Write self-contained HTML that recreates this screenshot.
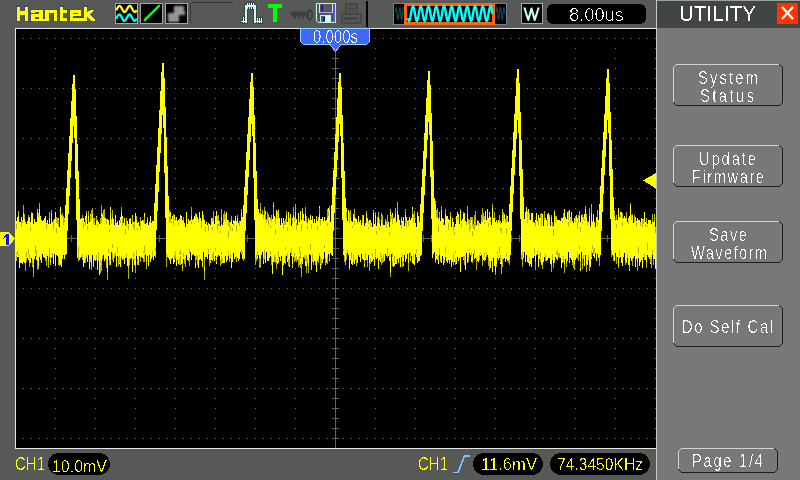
<!DOCTYPE html>
<html><head><meta charset="utf-8"><title>Hantek Utility</title>
<style>html,body{margin:0;padding:0;width:800px;height:480px;overflow:hidden;background:#565956;font-family:"Liberation Sans",sans-serif}svg{position:absolute;left:0;top:0;display:block}</style>
</head><body>
<svg width="800" height="480" viewBox="0 0 800 480" shape-rendering="crispEdges">
<rect x="0" y="0" width="800" height="480" fill="#565956"/>
<defs><filter id="th" filterUnits="userSpaceOnUse" x="0" y="0" width="800" height="480"><feComponentTransfer><feFuncA type="discrete" tableValues="0 0 1"/></feComponentTransfer></filter><filter id="tha" filterUnits="userSpaceOnUse" x="0" y="0" width="800" height="480"><feComponentTransfer><feFuncA type="discrete" tableValues="0 0 0 1"/></feComponentTransfer></filter><filter id="thb" filterUnits="userSpaceOnUse" x="0" y="0" width="800" height="480"><feComponentTransfer><feFuncA type="discrete" tableValues="0 0 1"/></feComponentTransfer></filter><filter id="thu" filterUnits="userSpaceOnUse" x="0" y="0" width="800" height="480"><feComponentTransfer><feFuncA type="discrete" tableValues="0 1"/></feComponentTransfer></filter></defs>
<rect x="16" y="29" width="640" height="419" fill="#000"/>
<path d="M15 28h641v1h-641zM15 28h1v421h-1zM15 448h641v1h-641z" fill="#e6e6e6"/>
<path d="M23 38h1v1h-1zM31 38h1v1h-1zM39 38h1v1h-1zM47 38h1v1h-1zM55 38h1v1h-1zM63 38h1v1h-1zM71 38h1v1h-1zM79 38h1v1h-1zM87 38h1v1h-1zM95 38h1v1h-1zM103 38h1v1h-1zM111 38h1v1h-1zM119 38h1v1h-1zM127 38h1v1h-1zM135 38h1v1h-1zM143 38h1v1h-1zM151 38h1v1h-1zM159 38h1v1h-1zM167 38h1v1h-1zM175 38h1v1h-1zM183 38h1v1h-1zM191 38h1v1h-1zM199 38h1v1h-1zM207 38h1v1h-1zM215 38h1v1h-1zM223 38h1v1h-1zM231 38h1v1h-1zM239 38h1v1h-1zM247 38h1v1h-1zM255 38h1v1h-1zM263 38h1v1h-1zM271 38h1v1h-1zM279 38h1v1h-1zM287 38h1v1h-1zM295 38h1v1h-1zM303 38h1v1h-1zM311 38h1v1h-1zM319 38h1v1h-1zM327 38h1v1h-1zM335 38h1v1h-1zM343 38h1v1h-1zM351 38h1v1h-1zM359 38h1v1h-1zM367 38h1v1h-1zM375 38h1v1h-1zM383 38h1v1h-1zM391 38h1v1h-1zM399 38h1v1h-1zM407 38h1v1h-1zM415 38h1v1h-1zM423 38h1v1h-1zM431 38h1v1h-1zM439 38h1v1h-1zM447 38h1v1h-1zM455 38h1v1h-1zM463 38h1v1h-1zM471 38h1v1h-1zM479 38h1v1h-1zM487 38h1v1h-1zM495 38h1v1h-1zM503 38h1v1h-1zM511 38h1v1h-1zM519 38h1v1h-1zM527 38h1v1h-1zM535 38h1v1h-1zM543 38h1v1h-1zM551 38h1v1h-1zM559 38h1v1h-1zM567 38h1v1h-1zM575 38h1v1h-1zM583 38h1v1h-1zM591 38h1v1h-1zM599 38h1v1h-1zM607 38h1v1h-1zM615 38h1v1h-1zM623 38h1v1h-1zM631 38h1v1h-1zM639 38h1v1h-1zM647 38h1v1h-1zM655 38h1v1h-1zM23 88h1v1h-1zM31 88h1v1h-1zM39 88h1v1h-1zM47 88h1v1h-1zM55 88h1v1h-1zM63 88h1v1h-1zM71 88h1v1h-1zM79 88h1v1h-1zM87 88h1v1h-1zM95 88h1v1h-1zM103 88h1v1h-1zM111 88h1v1h-1zM119 88h1v1h-1zM127 88h1v1h-1zM135 88h1v1h-1zM143 88h1v1h-1zM151 88h1v1h-1zM159 88h1v1h-1zM167 88h1v1h-1zM175 88h1v1h-1zM183 88h1v1h-1zM191 88h1v1h-1zM199 88h1v1h-1zM207 88h1v1h-1zM215 88h1v1h-1zM223 88h1v1h-1zM231 88h1v1h-1zM239 88h1v1h-1zM247 88h1v1h-1zM255 88h1v1h-1zM263 88h1v1h-1zM271 88h1v1h-1zM279 88h1v1h-1zM287 88h1v1h-1zM295 88h1v1h-1zM303 88h1v1h-1zM311 88h1v1h-1zM319 88h1v1h-1zM327 88h1v1h-1zM335 88h1v1h-1zM343 88h1v1h-1zM351 88h1v1h-1zM359 88h1v1h-1zM367 88h1v1h-1zM375 88h1v1h-1zM383 88h1v1h-1zM391 88h1v1h-1zM399 88h1v1h-1zM407 88h1v1h-1zM415 88h1v1h-1zM423 88h1v1h-1zM431 88h1v1h-1zM439 88h1v1h-1zM447 88h1v1h-1zM455 88h1v1h-1zM463 88h1v1h-1zM471 88h1v1h-1zM479 88h1v1h-1zM487 88h1v1h-1zM495 88h1v1h-1zM503 88h1v1h-1zM511 88h1v1h-1zM519 88h1v1h-1zM527 88h1v1h-1zM535 88h1v1h-1zM543 88h1v1h-1zM551 88h1v1h-1zM559 88h1v1h-1zM567 88h1v1h-1zM575 88h1v1h-1zM583 88h1v1h-1zM591 88h1v1h-1zM599 88h1v1h-1zM607 88h1v1h-1zM615 88h1v1h-1zM623 88h1v1h-1zM631 88h1v1h-1zM639 88h1v1h-1zM647 88h1v1h-1zM655 88h1v1h-1zM23 138h1v1h-1zM31 138h1v1h-1zM39 138h1v1h-1zM47 138h1v1h-1zM55 138h1v1h-1zM63 138h1v1h-1zM71 138h1v1h-1zM79 138h1v1h-1zM87 138h1v1h-1zM95 138h1v1h-1zM103 138h1v1h-1zM111 138h1v1h-1zM119 138h1v1h-1zM127 138h1v1h-1zM135 138h1v1h-1zM143 138h1v1h-1zM151 138h1v1h-1zM159 138h1v1h-1zM167 138h1v1h-1zM175 138h1v1h-1zM183 138h1v1h-1zM191 138h1v1h-1zM199 138h1v1h-1zM207 138h1v1h-1zM215 138h1v1h-1zM223 138h1v1h-1zM231 138h1v1h-1zM239 138h1v1h-1zM247 138h1v1h-1zM255 138h1v1h-1zM263 138h1v1h-1zM271 138h1v1h-1zM279 138h1v1h-1zM287 138h1v1h-1zM295 138h1v1h-1zM303 138h1v1h-1zM311 138h1v1h-1zM319 138h1v1h-1zM327 138h1v1h-1zM335 138h1v1h-1zM343 138h1v1h-1zM351 138h1v1h-1zM359 138h1v1h-1zM367 138h1v1h-1zM375 138h1v1h-1zM383 138h1v1h-1zM391 138h1v1h-1zM399 138h1v1h-1zM407 138h1v1h-1zM415 138h1v1h-1zM423 138h1v1h-1zM431 138h1v1h-1zM439 138h1v1h-1zM447 138h1v1h-1zM455 138h1v1h-1zM463 138h1v1h-1zM471 138h1v1h-1zM479 138h1v1h-1zM487 138h1v1h-1zM495 138h1v1h-1zM503 138h1v1h-1zM511 138h1v1h-1zM519 138h1v1h-1zM527 138h1v1h-1zM535 138h1v1h-1zM543 138h1v1h-1zM551 138h1v1h-1zM559 138h1v1h-1zM567 138h1v1h-1zM575 138h1v1h-1zM583 138h1v1h-1zM591 138h1v1h-1zM599 138h1v1h-1zM607 138h1v1h-1zM615 138h1v1h-1zM623 138h1v1h-1zM631 138h1v1h-1zM639 138h1v1h-1zM647 138h1v1h-1zM655 138h1v1h-1zM23 188h1v1h-1zM31 188h1v1h-1zM39 188h1v1h-1zM47 188h1v1h-1zM55 188h1v1h-1zM63 188h1v1h-1zM71 188h1v1h-1zM79 188h1v1h-1zM87 188h1v1h-1zM95 188h1v1h-1zM103 188h1v1h-1zM111 188h1v1h-1zM119 188h1v1h-1zM127 188h1v1h-1zM135 188h1v1h-1zM143 188h1v1h-1zM151 188h1v1h-1zM159 188h1v1h-1zM167 188h1v1h-1zM175 188h1v1h-1zM183 188h1v1h-1zM191 188h1v1h-1zM199 188h1v1h-1zM207 188h1v1h-1zM215 188h1v1h-1zM223 188h1v1h-1zM231 188h1v1h-1zM239 188h1v1h-1zM247 188h1v1h-1zM255 188h1v1h-1zM263 188h1v1h-1zM271 188h1v1h-1zM279 188h1v1h-1zM287 188h1v1h-1zM295 188h1v1h-1zM303 188h1v1h-1zM311 188h1v1h-1zM319 188h1v1h-1zM327 188h1v1h-1zM335 188h1v1h-1zM343 188h1v1h-1zM351 188h1v1h-1zM359 188h1v1h-1zM367 188h1v1h-1zM375 188h1v1h-1zM383 188h1v1h-1zM391 188h1v1h-1zM399 188h1v1h-1zM407 188h1v1h-1zM415 188h1v1h-1zM423 188h1v1h-1zM431 188h1v1h-1zM439 188h1v1h-1zM447 188h1v1h-1zM455 188h1v1h-1zM463 188h1v1h-1zM471 188h1v1h-1zM479 188h1v1h-1zM487 188h1v1h-1zM495 188h1v1h-1zM503 188h1v1h-1zM511 188h1v1h-1zM519 188h1v1h-1zM527 188h1v1h-1zM535 188h1v1h-1zM543 188h1v1h-1zM551 188h1v1h-1zM559 188h1v1h-1zM567 188h1v1h-1zM575 188h1v1h-1zM583 188h1v1h-1zM591 188h1v1h-1zM599 188h1v1h-1zM607 188h1v1h-1zM615 188h1v1h-1zM623 188h1v1h-1zM631 188h1v1h-1zM639 188h1v1h-1zM647 188h1v1h-1zM655 188h1v1h-1zM23 238h1v1h-1zM31 238h1v1h-1zM39 238h1v1h-1zM47 238h1v1h-1zM55 238h1v1h-1zM63 238h1v1h-1zM71 238h1v1h-1zM79 238h1v1h-1zM87 238h1v1h-1zM95 238h1v1h-1zM103 238h1v1h-1zM111 238h1v1h-1zM119 238h1v1h-1zM127 238h1v1h-1zM135 238h1v1h-1zM143 238h1v1h-1zM151 238h1v1h-1zM159 238h1v1h-1zM167 238h1v1h-1zM175 238h1v1h-1zM183 238h1v1h-1zM191 238h1v1h-1zM199 238h1v1h-1zM207 238h1v1h-1zM215 238h1v1h-1zM223 238h1v1h-1zM231 238h1v1h-1zM239 238h1v1h-1zM247 238h1v1h-1zM255 238h1v1h-1zM263 238h1v1h-1zM271 238h1v1h-1zM279 238h1v1h-1zM287 238h1v1h-1zM295 238h1v1h-1zM303 238h1v1h-1zM311 238h1v1h-1zM319 238h1v1h-1zM327 238h1v1h-1zM335 238h1v1h-1zM343 238h1v1h-1zM351 238h1v1h-1zM359 238h1v1h-1zM367 238h1v1h-1zM375 238h1v1h-1zM383 238h1v1h-1zM391 238h1v1h-1zM399 238h1v1h-1zM407 238h1v1h-1zM415 238h1v1h-1zM423 238h1v1h-1zM431 238h1v1h-1zM439 238h1v1h-1zM447 238h1v1h-1zM455 238h1v1h-1zM463 238h1v1h-1zM471 238h1v1h-1zM479 238h1v1h-1zM487 238h1v1h-1zM495 238h1v1h-1zM503 238h1v1h-1zM511 238h1v1h-1zM519 238h1v1h-1zM527 238h1v1h-1zM535 238h1v1h-1zM543 238h1v1h-1zM551 238h1v1h-1zM559 238h1v1h-1zM567 238h1v1h-1zM575 238h1v1h-1zM583 238h1v1h-1zM591 238h1v1h-1zM599 238h1v1h-1zM607 238h1v1h-1zM615 238h1v1h-1zM623 238h1v1h-1zM631 238h1v1h-1zM639 238h1v1h-1zM647 238h1v1h-1zM655 238h1v1h-1zM23 288h1v1h-1zM31 288h1v1h-1zM39 288h1v1h-1zM47 288h1v1h-1zM55 288h1v1h-1zM63 288h1v1h-1zM71 288h1v1h-1zM79 288h1v1h-1zM87 288h1v1h-1zM95 288h1v1h-1zM103 288h1v1h-1zM111 288h1v1h-1zM119 288h1v1h-1zM127 288h1v1h-1zM135 288h1v1h-1zM143 288h1v1h-1zM151 288h1v1h-1zM159 288h1v1h-1zM167 288h1v1h-1zM175 288h1v1h-1zM183 288h1v1h-1zM191 288h1v1h-1zM199 288h1v1h-1zM207 288h1v1h-1zM215 288h1v1h-1zM223 288h1v1h-1zM231 288h1v1h-1zM239 288h1v1h-1zM247 288h1v1h-1zM255 288h1v1h-1zM263 288h1v1h-1zM271 288h1v1h-1zM279 288h1v1h-1zM287 288h1v1h-1zM295 288h1v1h-1zM303 288h1v1h-1zM311 288h1v1h-1zM319 288h1v1h-1zM327 288h1v1h-1zM335 288h1v1h-1zM343 288h1v1h-1zM351 288h1v1h-1zM359 288h1v1h-1zM367 288h1v1h-1zM375 288h1v1h-1zM383 288h1v1h-1zM391 288h1v1h-1zM399 288h1v1h-1zM407 288h1v1h-1zM415 288h1v1h-1zM423 288h1v1h-1zM431 288h1v1h-1zM439 288h1v1h-1zM447 288h1v1h-1zM455 288h1v1h-1zM463 288h1v1h-1zM471 288h1v1h-1zM479 288h1v1h-1zM487 288h1v1h-1zM495 288h1v1h-1zM503 288h1v1h-1zM511 288h1v1h-1zM519 288h1v1h-1zM527 288h1v1h-1zM535 288h1v1h-1zM543 288h1v1h-1zM551 288h1v1h-1zM559 288h1v1h-1zM567 288h1v1h-1zM575 288h1v1h-1zM583 288h1v1h-1zM591 288h1v1h-1zM599 288h1v1h-1zM607 288h1v1h-1zM615 288h1v1h-1zM623 288h1v1h-1zM631 288h1v1h-1zM639 288h1v1h-1zM647 288h1v1h-1zM655 288h1v1h-1zM23 338h1v1h-1zM31 338h1v1h-1zM39 338h1v1h-1zM47 338h1v1h-1zM55 338h1v1h-1zM63 338h1v1h-1zM71 338h1v1h-1zM79 338h1v1h-1zM87 338h1v1h-1zM95 338h1v1h-1zM103 338h1v1h-1zM111 338h1v1h-1zM119 338h1v1h-1zM127 338h1v1h-1zM135 338h1v1h-1zM143 338h1v1h-1zM151 338h1v1h-1zM159 338h1v1h-1zM167 338h1v1h-1zM175 338h1v1h-1zM183 338h1v1h-1zM191 338h1v1h-1zM199 338h1v1h-1zM207 338h1v1h-1zM215 338h1v1h-1zM223 338h1v1h-1zM231 338h1v1h-1zM239 338h1v1h-1zM247 338h1v1h-1zM255 338h1v1h-1zM263 338h1v1h-1zM271 338h1v1h-1zM279 338h1v1h-1zM287 338h1v1h-1zM295 338h1v1h-1zM303 338h1v1h-1zM311 338h1v1h-1zM319 338h1v1h-1zM327 338h1v1h-1zM335 338h1v1h-1zM343 338h1v1h-1zM351 338h1v1h-1zM359 338h1v1h-1zM367 338h1v1h-1zM375 338h1v1h-1zM383 338h1v1h-1zM391 338h1v1h-1zM399 338h1v1h-1zM407 338h1v1h-1zM415 338h1v1h-1zM423 338h1v1h-1zM431 338h1v1h-1zM439 338h1v1h-1zM447 338h1v1h-1zM455 338h1v1h-1zM463 338h1v1h-1zM471 338h1v1h-1zM479 338h1v1h-1zM487 338h1v1h-1zM495 338h1v1h-1zM503 338h1v1h-1zM511 338h1v1h-1zM519 338h1v1h-1zM527 338h1v1h-1zM535 338h1v1h-1zM543 338h1v1h-1zM551 338h1v1h-1zM559 338h1v1h-1zM567 338h1v1h-1zM575 338h1v1h-1zM583 338h1v1h-1zM591 338h1v1h-1zM599 338h1v1h-1zM607 338h1v1h-1zM615 338h1v1h-1zM623 338h1v1h-1zM631 338h1v1h-1zM639 338h1v1h-1zM647 338h1v1h-1zM655 338h1v1h-1zM23 388h1v1h-1zM31 388h1v1h-1zM39 388h1v1h-1zM47 388h1v1h-1zM55 388h1v1h-1zM63 388h1v1h-1zM71 388h1v1h-1zM79 388h1v1h-1zM87 388h1v1h-1zM95 388h1v1h-1zM103 388h1v1h-1zM111 388h1v1h-1zM119 388h1v1h-1zM127 388h1v1h-1zM135 388h1v1h-1zM143 388h1v1h-1zM151 388h1v1h-1zM159 388h1v1h-1zM167 388h1v1h-1zM175 388h1v1h-1zM183 388h1v1h-1zM191 388h1v1h-1zM199 388h1v1h-1zM207 388h1v1h-1zM215 388h1v1h-1zM223 388h1v1h-1zM231 388h1v1h-1zM239 388h1v1h-1zM247 388h1v1h-1zM255 388h1v1h-1zM263 388h1v1h-1zM271 388h1v1h-1zM279 388h1v1h-1zM287 388h1v1h-1zM295 388h1v1h-1zM303 388h1v1h-1zM311 388h1v1h-1zM319 388h1v1h-1zM327 388h1v1h-1zM335 388h1v1h-1zM343 388h1v1h-1zM351 388h1v1h-1zM359 388h1v1h-1zM367 388h1v1h-1zM375 388h1v1h-1zM383 388h1v1h-1zM391 388h1v1h-1zM399 388h1v1h-1zM407 388h1v1h-1zM415 388h1v1h-1zM423 388h1v1h-1zM431 388h1v1h-1zM439 388h1v1h-1zM447 388h1v1h-1zM455 388h1v1h-1zM463 388h1v1h-1zM471 388h1v1h-1zM479 388h1v1h-1zM487 388h1v1h-1zM495 388h1v1h-1zM503 388h1v1h-1zM511 388h1v1h-1zM519 388h1v1h-1zM527 388h1v1h-1zM535 388h1v1h-1zM543 388h1v1h-1zM551 388h1v1h-1zM559 388h1v1h-1zM567 388h1v1h-1zM575 388h1v1h-1zM583 388h1v1h-1zM591 388h1v1h-1zM599 388h1v1h-1zM607 388h1v1h-1zM615 388h1v1h-1zM623 388h1v1h-1zM631 388h1v1h-1zM639 388h1v1h-1zM647 388h1v1h-1zM655 388h1v1h-1zM23 438h1v1h-1zM31 438h1v1h-1zM39 438h1v1h-1zM47 438h1v1h-1zM55 438h1v1h-1zM63 438h1v1h-1zM71 438h1v1h-1zM79 438h1v1h-1zM87 438h1v1h-1zM95 438h1v1h-1zM103 438h1v1h-1zM111 438h1v1h-1zM119 438h1v1h-1zM127 438h1v1h-1zM135 438h1v1h-1zM143 438h1v1h-1zM151 438h1v1h-1zM159 438h1v1h-1zM167 438h1v1h-1zM175 438h1v1h-1zM183 438h1v1h-1zM191 438h1v1h-1zM199 438h1v1h-1zM207 438h1v1h-1zM215 438h1v1h-1zM223 438h1v1h-1zM231 438h1v1h-1zM239 438h1v1h-1zM247 438h1v1h-1zM255 438h1v1h-1zM263 438h1v1h-1zM271 438h1v1h-1zM279 438h1v1h-1zM287 438h1v1h-1zM295 438h1v1h-1zM303 438h1v1h-1zM311 438h1v1h-1zM319 438h1v1h-1zM327 438h1v1h-1zM335 438h1v1h-1zM343 438h1v1h-1zM351 438h1v1h-1zM359 438h1v1h-1zM367 438h1v1h-1zM375 438h1v1h-1zM383 438h1v1h-1zM391 438h1v1h-1zM399 438h1v1h-1zM407 438h1v1h-1zM415 438h1v1h-1zM423 438h1v1h-1zM431 438h1v1h-1zM439 438h1v1h-1zM447 438h1v1h-1zM455 438h1v1h-1zM463 438h1v1h-1zM471 438h1v1h-1zM479 438h1v1h-1zM487 438h1v1h-1zM495 438h1v1h-1zM503 438h1v1h-1zM511 438h1v1h-1zM519 438h1v1h-1zM527 438h1v1h-1zM535 438h1v1h-1zM543 438h1v1h-1zM551 438h1v1h-1zM559 438h1v1h-1zM567 438h1v1h-1zM575 438h1v1h-1zM583 438h1v1h-1zM591 438h1v1h-1zM599 438h1v1h-1zM607 438h1v1h-1zM615 438h1v1h-1zM623 438h1v1h-1zM631 438h1v1h-1zM639 438h1v1h-1zM647 438h1v1h-1zM655 438h1v1h-1zM55 48h1v1h-1zM55 58h1v1h-1zM55 68h1v1h-1zM55 78h1v1h-1zM55 98h1v1h-1zM55 108h1v1h-1zM55 118h1v1h-1zM55 128h1v1h-1zM55 148h1v1h-1zM55 158h1v1h-1zM55 168h1v1h-1zM55 178h1v1h-1zM55 198h1v1h-1zM55 208h1v1h-1zM55 218h1v1h-1zM55 228h1v1h-1zM55 248h1v1h-1zM55 258h1v1h-1zM55 268h1v1h-1zM55 278h1v1h-1zM55 298h1v1h-1zM55 308h1v1h-1zM55 318h1v1h-1zM55 328h1v1h-1zM55 348h1v1h-1zM55 358h1v1h-1zM55 368h1v1h-1zM55 378h1v1h-1zM55 398h1v1h-1zM55 408h1v1h-1zM55 418h1v1h-1zM55 428h1v1h-1zM95 48h1v1h-1zM95 58h1v1h-1zM95 68h1v1h-1zM95 78h1v1h-1zM95 98h1v1h-1zM95 108h1v1h-1zM95 118h1v1h-1zM95 128h1v1h-1zM95 148h1v1h-1zM95 158h1v1h-1zM95 168h1v1h-1zM95 178h1v1h-1zM95 198h1v1h-1zM95 208h1v1h-1zM95 218h1v1h-1zM95 228h1v1h-1zM95 248h1v1h-1zM95 258h1v1h-1zM95 268h1v1h-1zM95 278h1v1h-1zM95 298h1v1h-1zM95 308h1v1h-1zM95 318h1v1h-1zM95 328h1v1h-1zM95 348h1v1h-1zM95 358h1v1h-1zM95 368h1v1h-1zM95 378h1v1h-1zM95 398h1v1h-1zM95 408h1v1h-1zM95 418h1v1h-1zM95 428h1v1h-1zM135 48h1v1h-1zM135 58h1v1h-1zM135 68h1v1h-1zM135 78h1v1h-1zM135 98h1v1h-1zM135 108h1v1h-1zM135 118h1v1h-1zM135 128h1v1h-1zM135 148h1v1h-1zM135 158h1v1h-1zM135 168h1v1h-1zM135 178h1v1h-1zM135 198h1v1h-1zM135 208h1v1h-1zM135 218h1v1h-1zM135 228h1v1h-1zM135 248h1v1h-1zM135 258h1v1h-1zM135 268h1v1h-1zM135 278h1v1h-1zM135 298h1v1h-1zM135 308h1v1h-1zM135 318h1v1h-1zM135 328h1v1h-1zM135 348h1v1h-1zM135 358h1v1h-1zM135 368h1v1h-1zM135 378h1v1h-1zM135 398h1v1h-1zM135 408h1v1h-1zM135 418h1v1h-1zM135 428h1v1h-1zM175 48h1v1h-1zM175 58h1v1h-1zM175 68h1v1h-1zM175 78h1v1h-1zM175 98h1v1h-1zM175 108h1v1h-1zM175 118h1v1h-1zM175 128h1v1h-1zM175 148h1v1h-1zM175 158h1v1h-1zM175 168h1v1h-1zM175 178h1v1h-1zM175 198h1v1h-1zM175 208h1v1h-1zM175 218h1v1h-1zM175 228h1v1h-1zM175 248h1v1h-1zM175 258h1v1h-1zM175 268h1v1h-1zM175 278h1v1h-1zM175 298h1v1h-1zM175 308h1v1h-1zM175 318h1v1h-1zM175 328h1v1h-1zM175 348h1v1h-1zM175 358h1v1h-1zM175 368h1v1h-1zM175 378h1v1h-1zM175 398h1v1h-1zM175 408h1v1h-1zM175 418h1v1h-1zM175 428h1v1h-1zM215 48h1v1h-1zM215 58h1v1h-1zM215 68h1v1h-1zM215 78h1v1h-1zM215 98h1v1h-1zM215 108h1v1h-1zM215 118h1v1h-1zM215 128h1v1h-1zM215 148h1v1h-1zM215 158h1v1h-1zM215 168h1v1h-1zM215 178h1v1h-1zM215 198h1v1h-1zM215 208h1v1h-1zM215 218h1v1h-1zM215 228h1v1h-1zM215 248h1v1h-1zM215 258h1v1h-1zM215 268h1v1h-1zM215 278h1v1h-1zM215 298h1v1h-1zM215 308h1v1h-1zM215 318h1v1h-1zM215 328h1v1h-1zM215 348h1v1h-1zM215 358h1v1h-1zM215 368h1v1h-1zM215 378h1v1h-1zM215 398h1v1h-1zM215 408h1v1h-1zM215 418h1v1h-1zM215 428h1v1h-1zM255 48h1v1h-1zM255 58h1v1h-1zM255 68h1v1h-1zM255 78h1v1h-1zM255 98h1v1h-1zM255 108h1v1h-1zM255 118h1v1h-1zM255 128h1v1h-1zM255 148h1v1h-1zM255 158h1v1h-1zM255 168h1v1h-1zM255 178h1v1h-1zM255 198h1v1h-1zM255 208h1v1h-1zM255 218h1v1h-1zM255 228h1v1h-1zM255 248h1v1h-1zM255 258h1v1h-1zM255 268h1v1h-1zM255 278h1v1h-1zM255 298h1v1h-1zM255 308h1v1h-1zM255 318h1v1h-1zM255 328h1v1h-1zM255 348h1v1h-1zM255 358h1v1h-1zM255 368h1v1h-1zM255 378h1v1h-1zM255 398h1v1h-1zM255 408h1v1h-1zM255 418h1v1h-1zM255 428h1v1h-1zM295 48h1v1h-1zM295 58h1v1h-1zM295 68h1v1h-1zM295 78h1v1h-1zM295 98h1v1h-1zM295 108h1v1h-1zM295 118h1v1h-1zM295 128h1v1h-1zM295 148h1v1h-1zM295 158h1v1h-1zM295 168h1v1h-1zM295 178h1v1h-1zM295 198h1v1h-1zM295 208h1v1h-1zM295 218h1v1h-1zM295 228h1v1h-1zM295 248h1v1h-1zM295 258h1v1h-1zM295 268h1v1h-1zM295 278h1v1h-1zM295 298h1v1h-1zM295 308h1v1h-1zM295 318h1v1h-1zM295 328h1v1h-1zM295 348h1v1h-1zM295 358h1v1h-1zM295 368h1v1h-1zM295 378h1v1h-1zM295 398h1v1h-1zM295 408h1v1h-1zM295 418h1v1h-1zM295 428h1v1h-1zM335 48h1v1h-1zM335 58h1v1h-1zM335 68h1v1h-1zM335 78h1v1h-1zM335 98h1v1h-1zM335 108h1v1h-1zM335 118h1v1h-1zM335 128h1v1h-1zM335 148h1v1h-1zM335 158h1v1h-1zM335 168h1v1h-1zM335 178h1v1h-1zM335 198h1v1h-1zM335 208h1v1h-1zM335 218h1v1h-1zM335 228h1v1h-1zM335 248h1v1h-1zM335 258h1v1h-1zM335 268h1v1h-1zM335 278h1v1h-1zM335 298h1v1h-1zM335 308h1v1h-1zM335 318h1v1h-1zM335 328h1v1h-1zM335 348h1v1h-1zM335 358h1v1h-1zM335 368h1v1h-1zM335 378h1v1h-1zM335 398h1v1h-1zM335 408h1v1h-1zM335 418h1v1h-1zM335 428h1v1h-1zM375 48h1v1h-1zM375 58h1v1h-1zM375 68h1v1h-1zM375 78h1v1h-1zM375 98h1v1h-1zM375 108h1v1h-1zM375 118h1v1h-1zM375 128h1v1h-1zM375 148h1v1h-1zM375 158h1v1h-1zM375 168h1v1h-1zM375 178h1v1h-1zM375 198h1v1h-1zM375 208h1v1h-1zM375 218h1v1h-1zM375 228h1v1h-1zM375 248h1v1h-1zM375 258h1v1h-1zM375 268h1v1h-1zM375 278h1v1h-1zM375 298h1v1h-1zM375 308h1v1h-1zM375 318h1v1h-1zM375 328h1v1h-1zM375 348h1v1h-1zM375 358h1v1h-1zM375 368h1v1h-1zM375 378h1v1h-1zM375 398h1v1h-1zM375 408h1v1h-1zM375 418h1v1h-1zM375 428h1v1h-1zM415 48h1v1h-1zM415 58h1v1h-1zM415 68h1v1h-1zM415 78h1v1h-1zM415 98h1v1h-1zM415 108h1v1h-1zM415 118h1v1h-1zM415 128h1v1h-1zM415 148h1v1h-1zM415 158h1v1h-1zM415 168h1v1h-1zM415 178h1v1h-1zM415 198h1v1h-1zM415 208h1v1h-1zM415 218h1v1h-1zM415 228h1v1h-1zM415 248h1v1h-1zM415 258h1v1h-1zM415 268h1v1h-1zM415 278h1v1h-1zM415 298h1v1h-1zM415 308h1v1h-1zM415 318h1v1h-1zM415 328h1v1h-1zM415 348h1v1h-1zM415 358h1v1h-1zM415 368h1v1h-1zM415 378h1v1h-1zM415 398h1v1h-1zM415 408h1v1h-1zM415 418h1v1h-1zM415 428h1v1h-1zM455 48h1v1h-1zM455 58h1v1h-1zM455 68h1v1h-1zM455 78h1v1h-1zM455 98h1v1h-1zM455 108h1v1h-1zM455 118h1v1h-1zM455 128h1v1h-1zM455 148h1v1h-1zM455 158h1v1h-1zM455 168h1v1h-1zM455 178h1v1h-1zM455 198h1v1h-1zM455 208h1v1h-1zM455 218h1v1h-1zM455 228h1v1h-1zM455 248h1v1h-1zM455 258h1v1h-1zM455 268h1v1h-1zM455 278h1v1h-1zM455 298h1v1h-1zM455 308h1v1h-1zM455 318h1v1h-1zM455 328h1v1h-1zM455 348h1v1h-1zM455 358h1v1h-1zM455 368h1v1h-1zM455 378h1v1h-1zM455 398h1v1h-1zM455 408h1v1h-1zM455 418h1v1h-1zM455 428h1v1h-1zM495 48h1v1h-1zM495 58h1v1h-1zM495 68h1v1h-1zM495 78h1v1h-1zM495 98h1v1h-1zM495 108h1v1h-1zM495 118h1v1h-1zM495 128h1v1h-1zM495 148h1v1h-1zM495 158h1v1h-1zM495 168h1v1h-1zM495 178h1v1h-1zM495 198h1v1h-1zM495 208h1v1h-1zM495 218h1v1h-1zM495 228h1v1h-1zM495 248h1v1h-1zM495 258h1v1h-1zM495 268h1v1h-1zM495 278h1v1h-1zM495 298h1v1h-1zM495 308h1v1h-1zM495 318h1v1h-1zM495 328h1v1h-1zM495 348h1v1h-1zM495 358h1v1h-1zM495 368h1v1h-1zM495 378h1v1h-1zM495 398h1v1h-1zM495 408h1v1h-1zM495 418h1v1h-1zM495 428h1v1h-1zM535 48h1v1h-1zM535 58h1v1h-1zM535 68h1v1h-1zM535 78h1v1h-1zM535 98h1v1h-1zM535 108h1v1h-1zM535 118h1v1h-1zM535 128h1v1h-1zM535 148h1v1h-1zM535 158h1v1h-1zM535 168h1v1h-1zM535 178h1v1h-1zM535 198h1v1h-1zM535 208h1v1h-1zM535 218h1v1h-1zM535 228h1v1h-1zM535 248h1v1h-1zM535 258h1v1h-1zM535 268h1v1h-1zM535 278h1v1h-1zM535 298h1v1h-1zM535 308h1v1h-1zM535 318h1v1h-1zM535 328h1v1h-1zM535 348h1v1h-1zM535 358h1v1h-1zM535 368h1v1h-1zM535 378h1v1h-1zM535 398h1v1h-1zM535 408h1v1h-1zM535 418h1v1h-1zM535 428h1v1h-1zM575 48h1v1h-1zM575 58h1v1h-1zM575 68h1v1h-1zM575 78h1v1h-1zM575 98h1v1h-1zM575 108h1v1h-1zM575 118h1v1h-1zM575 128h1v1h-1zM575 148h1v1h-1zM575 158h1v1h-1zM575 168h1v1h-1zM575 178h1v1h-1zM575 198h1v1h-1zM575 208h1v1h-1zM575 218h1v1h-1zM575 228h1v1h-1zM575 248h1v1h-1zM575 258h1v1h-1zM575 268h1v1h-1zM575 278h1v1h-1zM575 298h1v1h-1zM575 308h1v1h-1zM575 318h1v1h-1zM575 328h1v1h-1zM575 348h1v1h-1zM575 358h1v1h-1zM575 368h1v1h-1zM575 378h1v1h-1zM575 398h1v1h-1zM575 408h1v1h-1zM575 418h1v1h-1zM575 428h1v1h-1zM615 48h1v1h-1zM615 58h1v1h-1zM615 68h1v1h-1zM615 78h1v1h-1zM615 98h1v1h-1zM615 108h1v1h-1zM615 118h1v1h-1zM615 128h1v1h-1zM615 148h1v1h-1zM615 158h1v1h-1zM615 168h1v1h-1zM615 178h1v1h-1zM615 198h1v1h-1zM615 208h1v1h-1zM615 218h1v1h-1zM615 228h1v1h-1zM615 248h1v1h-1zM615 258h1v1h-1zM615 268h1v1h-1zM615 278h1v1h-1zM615 298h1v1h-1zM615 308h1v1h-1zM615 318h1v1h-1zM615 328h1v1h-1zM615 348h1v1h-1zM615 358h1v1h-1zM615 368h1v1h-1zM615 378h1v1h-1zM615 398h1v1h-1zM615 408h1v1h-1zM615 418h1v1h-1zM615 428h1v1h-1zM655 48h1v1h-1zM655 58h1v1h-1zM655 68h1v1h-1zM655 78h1v1h-1zM655 98h1v1h-1zM655 108h1v1h-1zM655 118h1v1h-1zM655 128h1v1h-1zM655 148h1v1h-1zM655 158h1v1h-1zM655 168h1v1h-1zM655 178h1v1h-1zM655 198h1v1h-1zM655 208h1v1h-1zM655 218h1v1h-1zM655 228h1v1h-1zM655 248h1v1h-1zM655 258h1v1h-1zM655 268h1v1h-1zM655 278h1v1h-1zM655 298h1v1h-1zM655 308h1v1h-1zM655 318h1v1h-1zM655 328h1v1h-1zM655 348h1v1h-1zM655 358h1v1h-1zM655 368h1v1h-1zM655 378h1v1h-1zM655 398h1v1h-1zM655 408h1v1h-1zM655 418h1v1h-1zM655 428h1v1h-1z" fill="#6c706c"/>
<path d="M335 29h1v419h-1zM16 238h640v1h-640zM332 38h7v1h-7zM332 48h7v1h-7zM332 58h7v1h-7zM332 68h7v1h-7zM332 78h7v1h-7zM332 88h7v1h-7zM332 98h7v1h-7zM332 108h7v1h-7zM332 118h7v1h-7zM332 128h7v1h-7zM332 138h7v1h-7zM332 148h7v1h-7zM332 158h7v1h-7zM332 168h7v1h-7zM332 178h7v1h-7zM332 188h7v1h-7zM332 198h7v1h-7zM332 208h7v1h-7zM332 218h7v1h-7zM332 228h7v1h-7zM332 238h7v1h-7zM332 248h7v1h-7zM332 258h7v1h-7zM332 268h7v1h-7zM332 278h7v1h-7zM332 288h7v1h-7zM332 298h7v1h-7zM332 308h7v1h-7zM332 318h7v1h-7zM332 328h7v1h-7zM332 338h7v1h-7zM332 348h7v1h-7zM332 358h7v1h-7zM332 368h7v1h-7zM332 378h7v1h-7zM332 388h7v1h-7zM332 398h7v1h-7zM332 408h7v1h-7zM332 418h7v1h-7zM332 428h7v1h-7zM332 438h7v1h-7zM23 235h1v7h-1zM31 235h1v7h-1zM39 235h1v7h-1zM47 235h1v7h-1zM55 235h1v7h-1zM63 235h1v7h-1zM71 235h1v7h-1zM79 235h1v7h-1zM87 235h1v7h-1zM95 235h1v7h-1zM103 235h1v7h-1zM111 235h1v7h-1zM119 235h1v7h-1zM127 235h1v7h-1zM135 235h1v7h-1zM143 235h1v7h-1zM151 235h1v7h-1zM159 235h1v7h-1zM167 235h1v7h-1zM175 235h1v7h-1zM183 235h1v7h-1zM191 235h1v7h-1zM199 235h1v7h-1zM207 235h1v7h-1zM215 235h1v7h-1zM223 235h1v7h-1zM231 235h1v7h-1zM239 235h1v7h-1zM247 235h1v7h-1zM255 235h1v7h-1zM263 235h1v7h-1zM271 235h1v7h-1zM279 235h1v7h-1zM287 235h1v7h-1zM295 235h1v7h-1zM303 235h1v7h-1zM311 235h1v7h-1zM319 235h1v7h-1zM327 235h1v7h-1zM335 235h1v7h-1zM343 235h1v7h-1zM351 235h1v7h-1zM359 235h1v7h-1zM367 235h1v7h-1zM375 235h1v7h-1zM383 235h1v7h-1zM391 235h1v7h-1zM399 235h1v7h-1zM407 235h1v7h-1zM415 235h1v7h-1zM423 235h1v7h-1zM431 235h1v7h-1zM439 235h1v7h-1zM447 235h1v7h-1zM455 235h1v7h-1zM463 235h1v7h-1zM471 235h1v7h-1zM479 235h1v7h-1zM487 235h1v7h-1zM495 235h1v7h-1zM503 235h1v7h-1zM511 235h1v7h-1zM519 235h1v7h-1zM527 235h1v7h-1zM535 235h1v7h-1zM543 235h1v7h-1zM551 235h1v7h-1zM559 235h1v7h-1zM567 235h1v7h-1zM575 235h1v7h-1zM583 235h1v7h-1zM591 235h1v7h-1zM599 235h1v7h-1zM607 235h1v7h-1zM615 235h1v7h-1zM623 235h1v7h-1zM631 235h1v7h-1zM639 235h1v7h-1zM647 235h1v7h-1zM655 235h1v7h-1z" fill="#5e645e"/>
<path d="M16 221h1V256h-1zM17 217h1V257h-1zM18 216h1V257h-1zM19 222h1V268h-1zM20 222h1V263h-1zM21 217h1V263h-1zM22 223h1V264h-1zM23 213h1V262h-1zM24 219h1V263h-1zM25 222h1V263h-1zM26 224h1V258h-1zM27 221h1V258h-1zM28 218h1V260h-1zM29 217h1V262h-1zM30 222h1V263h-1zM31 214h1V258h-1zM32 213h1V260h-1zM33 224h1V268h-1zM34 219h1V259h-1zM35 222h1V256h-1zM36 222h1V260h-1zM37 209h1V266h-1zM38 217h1V266h-1zM39 209h1V257h-1zM40 216h1V260h-1zM41 220h1V263h-1zM42 221h1V254h-1zM43 220h1V257h-1zM44 218h1V258h-1zM45 216h1V258h-1zM46 223h1V259h-1zM47 220h1V256h-1zM48 224h1V261h-1zM49 218h1V253h-1zM50 224h1V263h-1zM51 213h1V258h-1zM52 222h1V257h-1zM53 222h1V264h-1zM54 219h1V254h-1zM55 212h1V266h-1zM56 223h1V255h-1zM57 224h1V256h-1zM58 218h1V257h-1zM59 227h1V264h-1zM60 207h1V265h-1zM61 215h1V267h-1zM62 217h1V259h-1zM63 225h1V255h-1zM64 218h1V259h-1zM65 217h1V255h-1zM66 223h1V254h-1zM77 213h1V258h-1zM78 211h1V255h-1zM79 219h1V260h-1zM80 219h1V258h-1zM81 218h1V257h-1zM82 219h1V254h-1zM83 218h1V267h-1zM84 222h1V263h-1zM85 216h1V259h-1zM86 214h1V255h-1zM87 224h1V262h-1zM88 216h1V255h-1zM89 222h1V269h-1zM90 214h1V259h-1zM91 212h1V266h-1zM92 214h1V255h-1zM93 225h1V267h-1zM94 223h1V260h-1zM95 225h1V261h-1zM96 216h1V255h-1zM97 220h1V270h-1zM98 222h1V252h-1zM99 224h1V275h-1zM100 224h1V265h-1zM101 214h1V262h-1zM102 215h1V259h-1zM103 217h1V255h-1zM104 218h1V261h-1zM105 218h1V259h-1zM106 219h1V260h-1zM107 219h1V272h-1zM108 220h1V256h-1zM109 225h1V260h-1zM110 207h1V265h-1zM111 224h1V252h-1zM112 217h1V253h-1zM113 219h1V262h-1zM114 225h1V254h-1zM115 215h1V256h-1zM116 223h1V267h-1zM117 221h1V256h-1zM118 225h1V257h-1zM119 220h1V264h-1zM120 217h1V267h-1zM121 212h1V256h-1zM122 216h1V260h-1zM123 223h1V259h-1zM124 218h1V264h-1zM125 225h1V258h-1zM126 227h1V254h-1zM127 221h1V266h-1zM128 224h1V272h-1zM129 219h1V258h-1zM130 218h1V259h-1zM131 224h1V258h-1zM132 215h1V272h-1zM133 222h1V258h-1zM134 222h1V265h-1zM135 213h1V266h-1zM136 218h1V256h-1zM137 223h1V259h-1zM138 222h1V265h-1zM139 226h1V256h-1zM140 222h1V260h-1zM141 221h1V257h-1zM142 220h1V258h-1zM143 222h1V258h-1zM144 213h1V255h-1zM145 224h1V255h-1zM146 223h1V262h-1zM147 220h1V256h-1zM148 225h1V266h-1zM149 222h1V255h-1zM150 216h1V262h-1zM151 223h1V259h-1zM152 221h1V257h-1zM153 225h1V260h-1zM154 222h1V256h-1zM155 220h1V255h-1zM166 214h1V259h-1zM167 214h1V257h-1zM168 207h1V258h-1zM169 213h1V260h-1zM170 212h1V264h-1zM171 219h1V259h-1zM172 216h1V258h-1zM173 220h1V264h-1zM174 215h1V262h-1zM175 220h1V258h-1zM176 217h1V266h-1zM177 221h1V260h-1zM178 220h1V264h-1zM179 219h1V258h-1zM180 215h1V256h-1zM181 216h1V264h-1zM182 220h1V268h-1zM183 221h1V259h-1zM184 223h1V264h-1zM185 227h1V258h-1zM186 212h1V255h-1zM187 224h1V260h-1zM188 219h1V261h-1zM189 221h1V258h-1zM190 220h1V252h-1zM191 216h1V260h-1zM192 220h1V255h-1zM193 219h1V254h-1zM194 216h1V256h-1zM195 217h1V268h-1zM196 214h1V255h-1zM197 217h1V256h-1zM198 222h1V268h-1zM199 212h1V260h-1zM200 218h1V259h-1zM201 221h1V261h-1zM202 211h1V267h-1zM203 219h1V252h-1zM204 220h1V271h-1zM205 224h1V257h-1zM206 222h1V257h-1zM207 225h1V259h-1zM208 223h1V254h-1zM209 224h1V260h-1zM210 225h1V263h-1zM211 218h1V260h-1zM212 222h1V261h-1zM213 220h1V255h-1zM214 224h1V261h-1zM215 216h1V256h-1zM216 211h1V264h-1zM217 221h1V257h-1zM218 221h1V255h-1zM219 221h1V256h-1zM220 226h1V260h-1zM221 217h1V256h-1zM222 225h1V263h-1zM223 222h1V263h-1zM224 219h1V263h-1zM225 221h1V256h-1zM226 212h1V262h-1zM227 220h1V260h-1zM228 226h1V254h-1zM229 222h1V258h-1zM230 222h1V254h-1zM231 216h1V268h-1zM232 224h1V262h-1zM233 220h1V253h-1zM234 221h1V259h-1zM235 216h1V257h-1zM236 221h1V256h-1zM237 218h1V258h-1zM238 223h1V261h-1zM239 221h1V259h-1zM240 221h1V252h-1zM241 213h1V254h-1zM242 217h1V259h-1zM243 221h1V258h-1zM244 215h1V259h-1zM255 210h1V258h-1zM256 206h1V255h-1zM257 208h1V259h-1zM258 209h1V255h-1zM259 213h1V262h-1zM260 209h1V267h-1zM261 214h1V255h-1zM262 214h1V252h-1zM263 219h1V264h-1zM264 214h1V254h-1zM265 211h1V263h-1zM266 223h1V252h-1zM267 220h1V261h-1zM268 218h1V261h-1zM269 217h1V258h-1zM270 220h1V256h-1zM271 222h1V257h-1zM272 219h1V274h-1zM273 205h1V262h-1zM274 216h1V258h-1zM275 224h1V257h-1zM276 210h1V262h-1zM277 219h1V264h-1zM278 213h1V263h-1zM279 218h1V257h-1zM280 225h1V261h-1zM281 218h1V256h-1zM282 223h1V275h-1zM283 218h1V265h-1zM284 225h1V263h-1zM285 225h1V255h-1zM286 215h1V256h-1zM287 222h1V262h-1zM288 212h1V259h-1zM289 225h1V267h-1zM290 214h1V253h-1zM291 226h1V256h-1zM292 218h1V268h-1zM293 215h1V257h-1zM294 222h1V253h-1zM295 212h1V258h-1zM296 219h1V256h-1zM297 225h1V260h-1zM298 213h1V259h-1zM299 222h1V256h-1zM300 211h1V264h-1zM301 220h1V268h-1zM302 211h1V264h-1zM303 214h1V257h-1zM304 221h1V255h-1zM305 214h1V266h-1zM306 223h1V266h-1zM307 224h1V263h-1zM308 218h1V266h-1zM309 220h1V254h-1zM310 215h1V255h-1zM311 220h1V270h-1zM312 216h1V254h-1zM313 223h1V262h-1zM314 219h1V261h-1zM315 223h1V265h-1zM316 216h1V272h-1zM317 221h1V261h-1zM318 217h1V259h-1zM319 206h1V256h-1zM320 225h1V269h-1zM321 219h1V259h-1zM322 217h1V263h-1zM323 221h1V259h-1zM324 217h1V252h-1zM325 221h1V265h-1zM326 220h1V263h-1zM327 218h1V257h-1zM328 208h1V254h-1zM329 211h1V261h-1zM330 222h1V253h-1zM331 224h1V255h-1zM332 220h1V256h-1zM343 217h1V255h-1zM344 211h1V256h-1zM345 208h1V261h-1zM346 208h1V258h-1zM347 221h1V253h-1zM348 210h1V255h-1zM349 218h1V268h-1zM350 217h1V260h-1zM351 221h1V264h-1zM352 222h1V265h-1zM353 214h1V262h-1zM354 217h1V264h-1zM355 218h1V260h-1zM356 219h1V259h-1zM357 224h1V263h-1zM358 216h1V255h-1zM359 222h1V257h-1zM360 220h1V262h-1zM361 225h1V254h-1zM362 223h1V259h-1zM363 215h1V260h-1zM364 226h1V267h-1zM365 223h1V260h-1zM366 214h1V260h-1zM367 218h1V260h-1zM368 224h1V255h-1zM369 220h1V263h-1zM370 220h1V258h-1zM371 223h1V262h-1zM372 227h1V261h-1zM373 213h1V259h-1zM374 224h1V266h-1zM375 215h1V257h-1zM376 226h1V259h-1zM377 223h1V258h-1zM378 217h1V269h-1zM379 224h1V260h-1zM380 226h1V262h-1zM381 220h1V256h-1zM382 224h1V258h-1zM383 225h1V255h-1zM384 225h1V261h-1zM385 222h1V254h-1zM386 221h1V256h-1zM387 224h1V255h-1zM388 222h1V256h-1zM389 227h1V261h-1zM390 212h1V272h-1zM391 219h1V254h-1zM392 213h1V261h-1zM393 218h1V267h-1zM394 219h1V266h-1zM395 214h1V264h-1zM396 222h1V264h-1zM397 211h1V259h-1zM398 215h1V263h-1zM399 220h1V258h-1zM400 225h1V267h-1zM401 220h1V257h-1zM402 221h1V261h-1zM403 217h1V266h-1zM404 226h1V255h-1zM405 215h1V262h-1zM406 217h1V259h-1zM407 221h1V254h-1zM408 226h1V269h-1zM409 217h1V253h-1zM410 220h1V261h-1zM411 218h1V256h-1zM412 207h1V263h-1zM413 223h1V264h-1zM414 218h1V265h-1zM415 223h1V254h-1zM416 227h1V257h-1zM417 212h1V263h-1zM418 216h1V261h-1zM419 222h1V261h-1zM420 220h1V256h-1zM421 222h1V255h-1zM432 209h1V258h-1zM433 215h1V254h-1zM434 198h1V252h-1zM435 201h1V261h-1zM436 218h1V259h-1zM437 217h1V260h-1zM438 220h1V264h-1zM439 212h1V255h-1zM440 221h1V262h-1zM441 210h1V263h-1zM442 218h1V256h-1zM443 219h1V265h-1zM444 225h1V260h-1zM445 214h1V257h-1zM446 216h1V261h-1zM447 216h1V263h-1zM448 219h1V260h-1zM449 220h1V262h-1zM450 216h1V260h-1zM451 227h1V267h-1zM452 218h1V262h-1zM453 222h1V260h-1zM454 227h1V262h-1zM455 224h1V258h-1zM456 216h1V264h-1zM457 212h1V257h-1zM458 214h1V261h-1zM459 224h1V258h-1zM460 211h1V272h-1zM461 221h1V257h-1zM462 219h1V257h-1zM463 214h1V260h-1zM464 213h1V259h-1zM465 221h1V270h-1zM466 225h1V253h-1zM467 214h1V263h-1zM468 224h1V257h-1zM469 226h1V253h-1zM470 223h1V255h-1zM471 220h1V262h-1zM472 226h1V261h-1zM473 224h1V254h-1zM474 222h1V259h-1zM475 219h1V258h-1zM476 225h1V261h-1zM477 222h1V261h-1zM478 221h1V262h-1zM479 223h1V260h-1zM480 224h1V256h-1zM481 222h1V255h-1zM482 217h1V259h-1zM483 219h1V260h-1zM484 220h1V261h-1zM485 211h1V260h-1zM486 220h1V253h-1zM487 209h1V255h-1zM488 218h1V258h-1zM489 212h1V261h-1zM490 217h1V268h-1zM491 225h1V261h-1zM492 208h1V272h-1zM493 218h1V258h-1zM494 218h1V266h-1zM495 222h1V272h-1zM496 220h1V264h-1zM497 222h1V258h-1zM498 220h1V260h-1zM499 222h1V258h-1zM500 224h1V264h-1zM501 223h1V269h-1zM502 215h1V258h-1zM503 221h1V259h-1zM504 214h1V258h-1zM505 222h1V262h-1zM506 223h1V259h-1zM507 216h1V261h-1zM508 223h1V260h-1zM509 222h1V259h-1zM510 216h1V255h-1zM521 213h1V259h-1zM522 210h1V260h-1zM523 210h1V258h-1zM524 219h1V252h-1zM525 212h1V262h-1zM526 207h1V255h-1zM527 218h1V262h-1zM528 209h1V263h-1zM529 220h1V266h-1zM530 220h1V264h-1zM531 213h1V267h-1zM532 213h1V258h-1zM533 222h1V258h-1zM534 223h1V256h-1zM535 220h1V262h-1zM536 213h1V255h-1zM537 221h1V254h-1zM538 215h1V267h-1zM539 218h1V259h-1zM540 218h1V258h-1zM541 221h1V265h-1zM542 214h1V264h-1zM543 226h1V262h-1zM544 220h1V257h-1zM545 218h1V254h-1zM546 220h1V261h-1zM547 214h1V260h-1zM548 213h1V258h-1zM549 217h1V258h-1zM550 226h1V264h-1zM551 217h1V265h-1zM552 222h1V254h-1zM553 226h1V263h-1zM554 210h1V261h-1zM555 223h1V257h-1zM556 218h1V259h-1zM557 220h1V260h-1zM558 220h1V257h-1zM559 220h1V258h-1zM560 221h1V258h-1zM561 218h1V268h-1zM562 218h1V263h-1zM563 217h1V256h-1zM564 209h1V264h-1zM565 217h1V259h-1zM566 219h1V263h-1zM567 212h1V261h-1zM568 220h1V252h-1zM569 210h1V263h-1zM570 223h1V258h-1zM571 212h1V260h-1zM572 221h1V262h-1zM573 223h1V259h-1zM574 218h1V264h-1zM575 222h1V260h-1zM576 215h1V258h-1zM577 218h1V256h-1zM578 223h1V255h-1zM579 216h1V254h-1zM580 222h1V271h-1zM581 215h1V252h-1zM582 218h1V265h-1zM583 217h1V255h-1zM584 214h1V266h-1zM585 209h1V255h-1zM586 218h1V264h-1zM587 225h1V265h-1zM588 222h1V255h-1zM589 216h1V265h-1zM590 226h1V267h-1zM591 213h1V259h-1zM592 223h1V253h-1zM593 214h1V256h-1zM594 222h1V258h-1zM595 227h1V253h-1zM596 217h1V261h-1zM597 218h1V254h-1zM598 220h1V258h-1zM599 224h1V257h-1zM600 223h1V255h-1zM611 217h1V257h-1zM612 218h1V255h-1zM613 214h1V256h-1zM614 216h1V261h-1zM615 220h1V253h-1zM616 220h1V257h-1zM617 220h1V257h-1zM618 208h1V266h-1zM619 217h1V258h-1zM620 212h1V257h-1zM621 212h1V263h-1zM622 219h1V266h-1zM623 218h1V257h-1zM624 216h1V253h-1zM625 218h1V261h-1zM626 219h1V263h-1zM627 222h1V254h-1zM628 218h1V265h-1zM629 216h1V271h-1zM630 205h1V258h-1zM631 220h1V261h-1zM632 214h1V259h-1zM633 223h1V258h-1zM634 215h1V256h-1zM635 217h1V267h-1zM636 221h1V259h-1zM637 218h1V262h-1zM638 220h1V258h-1zM639 220h1V266h-1zM640 226h1V262h-1zM641 218h1V260h-1zM642 219h1V268h-1zM643 224h1V257h-1zM644 212h1V254h-1zM645 222h1V260h-1zM646 223h1V262h-1zM647 224h1V255h-1zM648 220h1V257h-1zM649 220h1V259h-1zM650 220h1V264h-1zM651 224h1V259h-1zM652 222h1V255h-1zM653 222h1V259h-1zM654 221h1V259h-1zM655 227h1V269h-1z" fill="#ffff00"/>
<path d="M16 256h1v5h-1zM16 224h1v5h-1zM16 253h1v2h-1zM17 251h1v3h-1zM18 211h1v5h-1zM18 254h1v2h-1zM21 221h1v6h-1zM22 220h1v3h-1zM23 205h1v8h-1zM24 214h1v5h-1zM25 263h1v8h-1zM26 258h1v4h-1zM26 252h1v5h-1zM28 215h1v3h-1zM28 249h1v6h-1zM29 262h1v5h-1zM29 255h1v4h-1zM30 227h1v4h-1zM31 212h1v2h-1zM32 260h1v7h-1zM33 268h1v9h-1zM33 263h1v2h-1zM35 246h1v7h-1zM36 250h1v7h-1zM37 266h1v4h-1zM37 210h1v2h-1zM37 261h1v5h-1zM38 213h1v4h-1zM38 266h1v3h-1zM39 203h1v6h-1zM45 258h1v3h-1zM46 259h1v7h-1zM46 224h1v5h-1zM46 255h1v2h-1zM48 261h1v7h-1zM49 212h1v6h-1zM49 253h1v4h-1zM49 248h1v5h-1zM50 263h1v2h-1zM50 258h1v2h-1zM51 210h1v3h-1zM52 253h1v4h-1zM53 220h1v2h-1zM53 222h1v7h-1zM56 217h1v6h-1zM56 228h1v5h-1zM57 218h1v6h-1zM58 257h1v8h-1zM58 220h1v6h-1zM59 264h1v2h-1zM62 213h1v4h-1zM63 216h1v9h-1zM64 219h1v3h-1zM65 218h1v4h-1zM66 224h1v7h-1zM77 210h1v3h-1zM77 216h1v2h-1zM78 255h1v6h-1zM78 247h1v7h-1zM79 217h1v2h-1zM82 215h1v4h-1zM82 254h1v6h-1zM83 223h1v5h-1zM85 259h1v4h-1zM85 220h1v5h-1zM86 211h1v3h-1zM86 255h1v3h-1zM87 226h1v4h-1zM88 211h1v5h-1zM90 259h1v3h-1zM90 215h1v6h-1zM91 210h1v2h-1zM91 266h1v4h-1zM91 212h1v7h-1zM92 208h1v6h-1zM93 218h1v7h-1zM94 218h1v5h-1zM96 255h1v5h-1zM96 217h1v4h-1zM97 224h1v3h-1zM98 252h1v9h-1zM100 218h1v6h-1zM100 265h1v8h-1zM100 260h1v3h-1zM101 205h1v9h-1zM101 262h1v9h-1zM101 216h1v7h-1zM102 213h1v2h-1zM102 256h1v3h-1zM103 210h1v7h-1zM104 209h1v9h-1zM106 260h1v8h-1zM106 219h1v5h-1zM107 272h1v8h-1zM108 249h1v4h-1zM109 260h1v5h-1zM109 229h1v3h-1zM110 210h1v3h-1zM111 219h1v5h-1zM112 210h1v7h-1zM112 253h1v7h-1zM112 244h1v4h-1zM113 258h1v2h-1zM114 254h1v4h-1zM115 252h1v4h-1zM117 247h1v6h-1zM118 257h1v9h-1zM119 256h1v7h-1zM120 220h1v3h-1zM121 207h1v5h-1zM121 256h1v2h-1zM122 219h1v7h-1zM125 229h1v5h-1zM126 218h1v9h-1zM126 254h1v4h-1zM128 272h1v7h-1zM128 225h1v5h-1zM128 268h1v4h-1zM129 258h1v7h-1zM132 217h1v6h-1zM133 258h1v2h-1zM133 224h1v4h-1zM133 253h1v4h-1zM134 223h1v7h-1zM134 258h1v2h-1zM135 266h1v7h-1zM136 216h1v2h-1zM136 218h1v2h-1zM136 250h1v6h-1zM137 259h1v6h-1zM137 228h1v2h-1zM140 217h1v5h-1zM140 260h1v2h-1zM140 223h1v7h-1zM140 257h1v3h-1zM143 220h1v2h-1zM143 258h1v4h-1zM143 251h1v2h-1zM144 255h1v7h-1zM144 217h1v7h-1zM144 246h1v7h-1zM145 253h1v2h-1zM146 262h1v7h-1zM147 217h1v3h-1zM152 251h1v6h-1zM153 228h1v7h-1zM154 216h1v6h-1zM155 215h1v5h-1zM155 255h1v3h-1zM155 225h1v2h-1zM155 248h1v3h-1zM166 259h1v8h-1zM166 254h1v5h-1zM169 210h1v3h-1zM169 216h1v7h-1zM170 217h1v4h-1zM171 221h1v2h-1zM173 214h1v6h-1zM173 220h1v5h-1zM174 255h1v5h-1zM175 251h1v7h-1zM178 222h1v3h-1zM179 258h1v7h-1zM179 252h1v2h-1zM180 256h1v9h-1zM180 250h1v5h-1zM182 268h1v3h-1zM182 263h1v3h-1zM183 217h1v4h-1zM183 253h1v4h-1zM184 260h1v4h-1zM185 258h1v9h-1zM189 258h1v8h-1zM189 249h1v4h-1zM191 207h1v9h-1zM191 221h1v3h-1zM195 213h1v4h-1zM195 256h1v7h-1zM196 255h1v5h-1zM197 256h1v9h-1zM198 219h1v3h-1zM199 255h1v2h-1zM201 222h1v6h-1zM203 215h1v4h-1zM204 271h1v9h-1zM204 260h1v7h-1zM205 227h1v5h-1zM208 225h1v6h-1zM208 249h1v4h-1zM209 260h1v6h-1zM210 260h1v2h-1zM212 218h1v4h-1zM212 227h1v3h-1zM212 254h1v4h-1zM213 211h1v9h-1zM213 255h1v4h-1zM213 252h1v3h-1zM215 248h1v3h-1zM216 260h1v2h-1zM217 216h1v5h-1zM217 224h1v6h-1zM218 215h1v6h-1zM218 224h1v2h-1zM219 222h1v4h-1zM220 260h1v6h-1zM220 231h1v2h-1zM221 209h1v8h-1zM221 256h1v8h-1zM221 221h1v3h-1zM221 252h1v3h-1zM222 259h1v3h-1zM223 214h1v8h-1zM224 211h1v8h-1zM225 214h1v7h-1zM228 220h1v6h-1zM228 254h1v2h-1zM228 231h1v7h-1zM228 251h1v2h-1zM229 258h1v4h-1zM229 222h1v5h-1zM230 254h1v5h-1zM230 226h1v5h-1zM231 216h1v4h-1zM232 228h1v3h-1zM233 223h1v3h-1zM236 256h1v6h-1zM236 225h1v6h-1zM237 215h1v3h-1zM239 222h1v4h-1zM241 209h1v4h-1zM241 250h1v3h-1zM242 252h1v2h-1zM243 258h1v3h-1zM255 258h1v7h-1zM256 197h1v9h-1zM256 255h1v6h-1zM257 201h1v7h-1zM257 208h1v6h-1zM257 251h1v5h-1zM259 262h1v6h-1zM259 258h1v4h-1zM260 203h1v6h-1zM260 210h1v5h-1zM260 259h1v7h-1zM262 210h1v4h-1zM263 215h1v4h-1zM263 258h1v2h-1zM264 207h1v7h-1zM264 254h1v5h-1zM264 250h1v4h-1zM265 214h1v6h-1zM266 219h1v4h-1zM267 212h1v8h-1zM268 214h1v4h-1zM268 220h1v5h-1zM270 218h1v2h-1zM270 225h1v3h-1zM270 251h1v4h-1zM271 215h1v7h-1zM271 257h1v8h-1zM273 202h1v3h-1zM273 207h1v7h-1zM274 258h1v4h-1zM274 255h1v3h-1zM275 218h1v6h-1zM275 257h1v6h-1zM275 229h1v5h-1zM276 262h1v7h-1zM277 211h1v8h-1zM277 259h1v2h-1zM278 209h1v4h-1zM278 251h1v7h-1zM283 223h1v6h-1zM284 221h1v4h-1zM285 219h1v6h-1zM285 255h1v9h-1zM285 247h1v3h-1zM286 211h1v4h-1zM286 220h1v2h-1zM287 227h1v4h-1zM287 253h1v5h-1zM288 259h1v7h-1zM289 218h1v7h-1zM289 260h1v5h-1zM291 248h1v7h-1zM292 220h1v4h-1zM292 264h1v3h-1zM293 207h1v8h-1zM294 217h1v5h-1zM294 253h1v9h-1zM295 204h1v8h-1zM295 258h1v3h-1zM296 256h1v6h-1zM296 223h1v7h-1zM298 259h1v8h-1zM299 256h1v9h-1zM299 247h1v6h-1zM300 264h1v4h-1zM300 252h1v7h-1zM301 268h1v9h-1zM301 224h1v7h-1zM301 261h1v6h-1zM302 208h1v3h-1zM303 218h1v2h-1zM304 255h1v4h-1zM305 207h1v7h-1zM305 257h1v4h-1zM306 216h1v7h-1zM306 266h1v7h-1zM306 255h1v7h-1zM307 222h1v2h-1zM307 226h1v3h-1zM307 259h1v4h-1zM308 266h1v7h-1zM310 244h1v6h-1zM311 224h1v5h-1zM312 254h1v8h-1zM313 262h1v3h-1zM315 261h1v4h-1zM316 217h1v2h-1zM317 226h1v4h-1zM318 259h1v4h-1zM319 208h1v6h-1zM319 253h1v3h-1zM320 219h1v6h-1zM320 257h1v7h-1zM321 259h1v6h-1zM324 245h1v3h-1zM325 258h1v6h-1zM327 209h1v9h-1zM327 257h1v7h-1zM327 223h1v3h-1zM328 212h1v4h-1zM329 206h1v5h-1zM329 255h1v4h-1zM331 218h1v6h-1zM331 226h1v3h-1zM343 249h1v2h-1zM344 256h1v6h-1zM345 261h1v4h-1zM346 258h1v2h-1zM346 212h1v6h-1zM346 253h1v5h-1zM347 250h1v3h-1zM349 212h1v6h-1zM349 268h1v2h-1zM349 218h1v5h-1zM350 210h1v7h-1zM351 252h1v7h-1zM352 226h1v2h-1zM353 255h1v7h-1zM354 209h1v8h-1zM354 221h1v4h-1zM356 259h1v7h-1zM357 222h1v2h-1zM362 215h1v8h-1zM364 261h1v3h-1zM365 253h1v6h-1zM366 211h1v3h-1zM367 260h1v7h-1zM368 221h1v3h-1zM368 227h1v2h-1zM369 263h1v8h-1zM370 258h1v6h-1zM370 223h1v4h-1zM372 253h1v4h-1zM373 210h1v3h-1zM375 212h1v3h-1zM375 249h1v7h-1zM376 231h1v3h-1zM377 217h1v6h-1zM378 212h1v5h-1zM379 219h1v5h-1zM379 227h1v3h-1zM380 253h1v4h-1zM381 213h1v7h-1zM381 256h1v9h-1zM382 215h1v9h-1zM382 258h1v5h-1zM383 255h1v7h-1zM385 219h1v3h-1zM386 221h1v7h-1zM387 215h1v9h-1zM387 255h1v3h-1zM387 248h1v6h-1zM389 232h1v3h-1zM389 254h1v3h-1zM390 209h1v3h-1zM390 272h1v5h-1zM390 216h1v6h-1zM391 215h1v4h-1zM392 261h1v5h-1zM392 217h1v7h-1zM392 253h1v4h-1zM394 217h1v2h-1zM394 256h1v7h-1zM395 208h1v6h-1zM397 202h1v9h-1zM401 217h1v3h-1zM401 223h1v5h-1zM402 261h1v6h-1zM402 254h1v3h-1zM403 261h1v3h-1zM405 209h1v6h-1zM405 219h1v4h-1zM406 222h1v5h-1zM408 220h1v6h-1zM408 269h1v2h-1zM408 263h1v6h-1zM410 252h1v6h-1zM412 209h1v5h-1zM413 214h1v9h-1zM413 255h1v4h-1zM414 211h1v7h-1zM416 249h1v4h-1zM420 215h1v5h-1zM432 204h1v5h-1zM433 220h1v3h-1zM435 261h1v2h-1zM435 202h1v2h-1zM436 210h1v8h-1zM436 254h1v2h-1zM437 208h1v9h-1zM438 218h1v2h-1zM438 225h1v7h-1zM438 256h1v4h-1zM439 213h1v5h-1zM439 248h1v7h-1zM440 259h1v3h-1zM441 206h1v4h-1zM443 222h1v3h-1zM443 259h1v2h-1zM444 260h1v3h-1zM445 209h1v5h-1zM445 247h1v6h-1zM448 223h1v7h-1zM449 262h1v2h-1zM450 212h1v4h-1zM453 260h1v5h-1zM453 226h1v5h-1zM453 253h1v7h-1zM454 232h1v3h-1zM455 258h1v7h-1zM455 251h1v2h-1zM457 217h1v3h-1zM460 209h1v2h-1zM461 223h1v5h-1zM463 212h1v2h-1zM463 256h1v3h-1zM464 259h1v6h-1zM464 256h1v3h-1zM466 222h1v3h-1zM467 206h1v8h-1zM468 219h1v5h-1zM468 257h1v5h-1zM469 220h1v6h-1zM469 227h1v5h-1zM469 249h1v2h-1zM470 217h1v6h-1zM470 225h1v4h-1zM471 217h1v3h-1zM471 252h1v5h-1zM472 217h1v9h-1zM472 261h1v2h-1zM472 231h1v5h-1zM473 224h1v5h-1zM474 215h1v7h-1zM474 224h1v6h-1zM474 249h1v6h-1zM475 211h1v8h-1zM475 220h1v6h-1zM476 261h1v9h-1zM476 257h1v4h-1zM477 220h1v2h-1zM478 223h1v3h-1zM479 255h1v5h-1zM480 252h1v2h-1zM481 215h1v7h-1zM482 208h1v9h-1zM482 259h1v7h-1zM482 218h1v4h-1zM483 213h1v6h-1zM484 216h1v4h-1zM484 222h1v2h-1zM484 252h1v5h-1zM486 253h1v4h-1zM488 258h1v8h-1zM488 223h1v4h-1zM489 261h1v9h-1zM489 214h1v2h-1zM490 220h1v2h-1zM492 204h1v4h-1zM494 212h1v6h-1zM495 272h1v3h-1zM496 264h1v3h-1zM497 222h1v2h-1zM497 252h1v2h-1zM498 255h1v2h-1zM499 215h1v7h-1zM499 247h1v6h-1zM500 221h1v3h-1zM500 228h1v3h-1zM500 255h1v7h-1zM501 269h1v5h-1zM501 228h1v5h-1zM501 264h1v4h-1zM502 209h1v6h-1zM502 258h1v9h-1zM503 212h1v9h-1zM505 219h1v3h-1zM506 215h1v8h-1zM506 228h1v6h-1zM506 253h1v4h-1zM507 219h1v2h-1zM508 260h1v3h-1zM509 259h1v6h-1zM510 208h1v8h-1zM521 255h1v3h-1zM522 201h1v9h-1zM522 260h1v7h-1zM522 252h1v6h-1zM527 211h1v7h-1zM527 219h1v4h-1zM529 213h1v7h-1zM529 257h1v4h-1zM534 248h1v7h-1zM535 262h1v8h-1zM535 222h1v4h-1zM537 251h1v2h-1zM538 220h1v5h-1zM539 254h1v2h-1zM540 214h1v4h-1zM540 258h1v4h-1zM540 252h1v6h-1zM541 213h1v8h-1zM541 221h1v5h-1zM542 264h1v5h-1zM544 211h1v9h-1zM545 254h1v7h-1zM547 219h1v7h-1zM549 215h1v2h-1zM551 215h1v2h-1zM551 265h1v7h-1zM552 254h1v6h-1zM552 222h1v5h-1zM553 263h1v5h-1zM553 229h1v7h-1zM554 261h1v2h-1zM554 210h1v2h-1zM555 216h1v7h-1zM556 216h1v2h-1zM556 252h1v3h-1zM557 250h1v5h-1zM558 254h1v3h-1zM559 253h1v5h-1zM562 221h1v2h-1zM563 213h1v4h-1zM563 256h1v6h-1zM564 264h1v9h-1zM566 263h1v4h-1zM568 211h1v9h-1zM568 222h1v4h-1zM569 258h1v3h-1zM570 217h1v6h-1zM572 262h1v3h-1zM573 259h1v9h-1zM574 264h1v6h-1zM575 216h1v6h-1zM577 256h1v3h-1zM577 222h1v7h-1zM577 253h1v3h-1zM578 215h1v8h-1zM578 255h1v6h-1zM579 211h1v5h-1zM579 246h1v3h-1zM580 227h1v5h-1zM580 261h1v7h-1zM582 214h1v4h-1zM582 265h1v4h-1zM582 222h1v2h-1zM582 258h1v6h-1zM583 255h1v4h-1zM583 217h1v3h-1zM584 219h1v2h-1zM585 206h1v3h-1zM586 214h1v4h-1zM586 264h1v8h-1zM587 221h1v4h-1zM588 255h1v5h-1zM589 208h1v8h-1zM589 265h1v6h-1zM590 226h1v2h-1zM591 204h1v9h-1zM591 251h1v6h-1zM592 221h1v2h-1zM592 245h1v4h-1zM593 249h1v5h-1zM594 248h1v5h-1zM597 210h1v8h-1zM597 222h1v4h-1zM599 257h1v9h-1zM611 211h1v6h-1zM611 219h1v5h-1zM611 250h1v7h-1zM613 208h1v6h-1zM613 256h1v5h-1zM614 210h1v6h-1zM616 215h1v5h-1zM616 257h1v7h-1zM616 224h1v4h-1zM618 266h1v2h-1zM619 250h1v6h-1zM620 215h1v3h-1zM622 213h1v6h-1zM622 222h1v4h-1zM625 261h1v4h-1zM626 212h1v7h-1zM627 254h1v4h-1zM628 220h1v4h-1zM629 265h1v4h-1zM630 203h1v2h-1zM631 215h1v5h-1zM632 259h1v7h-1zM632 214h1v2h-1zM634 215h1v7h-1zM636 222h1v5h-1zM637 262h1v9h-1zM638 247h1v7h-1zM640 222h1v4h-1zM642 220h1v7h-1zM643 219h1v5h-1zM644 254h1v6h-1zM645 224h1v3h-1zM646 218h1v5h-1zM646 262h1v6h-1zM647 225h1v2h-1zM647 243h1v7h-1zM650 257h1v6h-1zM651 259h1v9h-1zM652 214h1v8h-1zM652 250h1v5h-1zM653 259h1v6h-1zM654 214h1v7h-1zM655 228h1v5h-1z" fill="#b4b400"/>
<path d="M63.5 240L73 75L74 75L74 117L67 240ZM74 75L75 75L81 240L77 240L74 117ZM152.5 240L162 63L163 63L163 105L156 240ZM163 63L164 63L170 240L166 240L163 105ZM241.5 240L251 73L252 73L252 115L245 240ZM252 73L253 73L259 240L255 240L252 115ZM329.5 240L339 73L340 73L340 115L333 240ZM340 73L341 73L347 240L343 240L340 115ZM418.5 240L428 71L429 71L429 113L422 240ZM429 71L430 71L436 240L432 240L429 113ZM507.5 240L517 69L518 69L518 111L511 240ZM518 69L519 69L525 240L521 240L518 111ZM597.5 240L607 69L608 69L608 111L601 240ZM608 69L609 69L615 240L611 240L608 111Z" fill="#ffff00"/>
<path d="M0 232H9L15 238.5L9 246H0Z" fill="#ffff00"/>
<path d="M6 234h2.5v10.5H6zM3.5 236.5L6 234V236.8L3.5 238.5Z" fill="#1010ff"/>
<path d="M643 180.5L656 173V188.5Z" fill="#ffff00"/>
<path d="M300.5 28.5H369.5V41.5L366.5 44.5H341L335.5 51.5L330 44.5H303.5L300.5 41.5Z" fill="#4068f8" stroke="#8fd0ff" stroke-width="1"/>
<g filter="url(#thb)"><text transform="translate(313.000 43) scale(1.0 1)" x="0" y="0" font-size="17.44" font-family="Liberation Sans" fill="#ffffff" textLength="45.000" lengthAdjust="spacingAndGlyphs">0.000s</text></g>
<rect x="656" y="0" width="144" height="480" fill="#787878"/>
<rect x="657" y="1" width="143" height="27" fill="#424642"/>
<rect x="656" y="0" width="144" height="1" fill="#a0a0a0"/>
<rect x="656" y="0" width="1" height="480" fill="#c8c8c8"/>
<g filter="url(#thu)"><text transform="translate(679.000 21) scale(1.0 1)" x="0" y="0" font-size="21.8" font-family="Liberation Sans" fill="#ffffff" textLength="77.000" lengthAdjust="spacingAndGlyphs">UTILITY</text></g>
<rect x="777" y="3" width="21" height="21" fill="#ff3300"/>
<path d="M782 7L793 19M793 7L782 19" stroke="#ffffff" stroke-width="2.2" shape-rendering="auto"/>
<path d="M673.5 102.5V67.5L676.5 64.5H779.5" fill="none" stroke="#d8d0d8" stroke-width="1"/><path d="M779.5 64.5L782.5 67.5V102.5L779.5 105.5H676.5L673.5 102.5" fill="none" stroke="#1e1e1e" stroke-width="1"/>
<g filter="url(#thb)"><text transform="translate(698.000 84) scale(0.78 1)" x="0" y="0" font-size="18.9" font-family="Liberation Sans" fill="#ffffff" textLength="76.923" lengthAdjust="spacing">System</text></g>
<g filter="url(#thb)"><text transform="translate(700.000 102) scale(0.78 1)" x="0" y="0" font-size="18.9" font-family="Liberation Sans" fill="#ffffff" textLength="69.231" lengthAdjust="spacing">Status</text></g>
<path d="M673.5 183.5V148.5L676.5 145.5H779.5" fill="none" stroke="#d8d0d8" stroke-width="1"/><path d="M779.5 145.5L782.5 148.5V183.5L779.5 186.5H676.5L673.5 183.5" fill="none" stroke="#1e1e1e" stroke-width="1"/>
<g filter="url(#thb)"><text transform="translate(699.000 165) scale(0.78 1)" x="0" y="0" font-size="18.9" font-family="Liberation Sans" fill="#ffffff" textLength="73.077" lengthAdjust="spacing">Update</text></g>
<g filter="url(#thb)"><text transform="translate(692.000 183) scale(0.78 1)" x="0" y="0" font-size="18.9" font-family="Liberation Sans" fill="#ffffff" textLength="92.308" lengthAdjust="spacing">Firmware</text></g>
<path d="M673.5 259.5V224.5L676.5 221.5H779.5" fill="none" stroke="#d8d0d8" stroke-width="1"/><path d="M779.5 221.5L782.5 224.5V259.5L779.5 262.5H676.5L673.5 259.5" fill="none" stroke="#1e1e1e" stroke-width="1"/>
<g filter="url(#thb)"><text transform="translate(709.000 241) scale(0.78 1)" x="0" y="0" font-size="18.9" font-family="Liberation Sans" fill="#ffffff" textLength="48.718" lengthAdjust="spacing">Save</text></g>
<g filter="url(#thb)"><text transform="translate(691.000 259) scale(0.78 1)" x="0" y="0" font-size="18.9" font-family="Liberation Sans" fill="#ffffff" textLength="97.436" lengthAdjust="spacing">Waveform</text></g>
<path d="M673.5 343.5V308.5L676.5 305.5H779.5" fill="none" stroke="#d8d0d8" stroke-width="1"/><path d="M779.5 305.5L782.5 308.5V343.5L779.5 346.5H676.5L673.5 343.5" fill="none" stroke="#1e1e1e" stroke-width="1"/>
<g filter="url(#thb)"><text transform="translate(682.000 333) scale(0.78 1)" x="0" y="0" font-size="18.9" font-family="Liberation Sans" fill="#ffffff" textLength="116.667" lengthAdjust="spacing">Do Self Cal</text></g>
<path d="M678.5 469.5V451.5L681.5 448.5H774.5" fill="none" stroke="#d8d0d8" stroke-width="1"/><path d="M774.5 448.5L777.5 451.5V469.5L774.5 472.5H681.5L678.5 469.5" fill="none" stroke="#1e1e1e" stroke-width="1"/>
<g filter="url(#thb)"><text transform="translate(692.000 467) scale(0.78 1)" x="0" y="0" font-size="18.9" font-family="Liberation Sans" fill="#ffffff" textLength="91.026" lengthAdjust="spacing">Page 1/4</text></g>
<g><path d="M17 7h3v14h-3zM25 7h3v14h-3zM20 11h5v4h-5zM31 10h12v2h-12zM31 12h4v1h-4zM39 12h4v2h-4zM31 14h12v3h-12zM31 17h4v2h-4zM39 17h4v2h-4zM31 19h14v2h-14zM45 10h12v3h-12zM45 13h4v8h-4zM54 13h3v8h-3zM60 7h3v14h-3zM63 10h4v3h-4zM63 18h4v3h-4zM70 10h11v3h-11zM70 13h3v5h-3zM78 13h3v3h-3zM73 14h5v2h-5zM70 18h17v3h-17zM84 7h3v11h-3zM87 12.5L90.5 10H95L88.5 15.5L87 16.5ZM87 15L89 14L95 19.5V21H92L87 17Z" fill="none" stroke="#4a4b64" stroke-width="2" stroke-linejoin="miter"/><path d="M17 7h3v14h-3zM25 7h3v14h-3zM20 11h5v4h-5zM31 10h12v2h-12zM31 12h4v1h-4zM39 12h4v2h-4zM31 14h12v3h-12zM31 17h4v2h-4zM39 17h4v2h-4zM31 19h14v2h-14zM45 10h12v3h-12zM45 13h4v8h-4zM54 13h3v8h-3zM60 7h3v14h-3zM63 10h4v3h-4zM63 18h4v3h-4zM70 10h11v3h-11zM70 13h3v5h-3zM78 13h3v3h-3zM73 14h5v2h-5zM70 18h17v3h-17zM84 7h3v11h-3z" fill="#ffff00"/>
<path d="M87 12.5L90.5 10H95L88.5 15.5L87 16.5ZM87 15L89 14L95 19.5V21H92L87 17Z" fill="#ffff00"/></g>
<rect x="115.5" y="3.5" width="22" height="20" fill="#000" stroke="#aaa4aa" stroke-width="1"/>
<rect x="140.5" y="3.5" width="22" height="20" fill="#000" stroke="#aaa4aa" stroke-width="1"/>
<rect x="165.5" y="3.5" width="22" height="20" fill="#000" stroke="#aaa4aa" stroke-width="1"/>
<path d="M116.20 10.28 L116.70 9.38 L117.20 8.42 L117.70 7.52 L118.20 6.74 L118.70 6.17 L119.20 5.85 L119.70 5.82 L120.20 6.08 L120.70 6.61 L121.20 7.35 L121.70 8.24 L122.20 9.19 L122.70 10.11 L123.20 10.92 L123.70 11.54 L124.20 11.91 L124.70 11.99 L125.20 11.79 L125.70 11.32 L126.20 10.61 L126.70 9.75 L127.20 8.80 L127.70 7.87 L128.20 7.03 L128.70 6.37 L129.20 5.95 L129.70 5.80 L130.20 5.95 L130.70 6.37 L131.20 7.03 L131.70 7.87 L132.20 8.80 L132.70 9.75 L133.20 10.61 L133.70 11.32 L134.20 11.79 L134.70 11.99 L135.20 11.91 L135.70 11.54 L136.20 10.92 L136.70 10.11" fill="none" stroke="#ffff00" stroke-width="2.3" shape-rendering="auto"/>
<path d="M116.20 18.66 L116.70 17.70 L117.20 16.72 L117.70 15.83 L118.20 15.11 L118.70 14.62 L119.20 14.41 L119.70 14.50 L120.20 14.88 L120.70 15.52 L121.20 16.35 L121.70 17.30 L122.20 18.28 L122.70 19.20 L123.20 19.96 L123.70 20.51 L124.20 20.78 L124.70 20.75 L125.20 20.42 L125.70 19.83 L126.20 19.03 L126.70 18.09 L127.20 17.11 L127.70 16.17 L128.20 15.37 L128.70 14.78 L129.20 14.45 L129.70 14.42 L130.20 14.69 L130.70 15.24 L131.20 16.00 L131.70 16.92 L132.20 17.90 L132.70 18.85 L133.20 19.68 L133.70 20.32 L134.20 20.70 L134.70 20.79 L135.20 20.58 L135.70 20.09 L136.20 19.37 L136.70 18.48" fill="none" stroke="#00ffff" stroke-width="2.3" shape-rendering="auto"/>
<path d="M144.8 20L159 5.8" stroke="#00ff00" stroke-width="2.5" stroke-linecap="round" shape-rendering="auto"/>
<defs><filter id="bl" x="-20%" y="-20%" width="140%" height="140%"><feGaussianBlur stdDeviation="0.8"/></filter></defs>
<g filter="url(#bl)"><path d="M174 6H184V10L185 12V15H179V22H168V13H174Z" fill="#9c9c9c" shape-rendering="auto"/><path d="M171 15h1v5h-1zM175 16h1v4h-1zM177 8h1v5h-1zM181 9h1v3h-1z" fill="#707070"/></g>
<path d="M233 2.5H192.5L190.5 4.5V21.5L192.5 23.5" fill="none" stroke="#3a3638" stroke-width="1" shape-rendering="auto"/>
<path d="M241 21h4v1h-4zM243 17h1v6h-1zM245 5h2v18h-2zM245 5h10v2h-10zM247 3h1v6h-1zM249 3h1v6h-1zM251 3h1v6h-1zM253 3h1v6h-1zM254 5h2v18h-2zM256 21h6v1h-6zM257 18h1v5h-1zM259 18h1v5h-1zM261 18h1v5h-1z" fill="none" stroke="#3a4446" stroke-width="2"/><path d="M241 21h4v1h-4zM243 17h1v6h-1zM245 5h2v18h-2zM245 5h10v2h-10zM247 3h1v6h-1zM249 3h1v6h-1zM251 3h1v6h-1zM253 3h1v6h-1zM254 5h2v18h-2zM256 21h6v1h-6zM257 18h1v5h-1zM259 18h1v5h-1zM261 18h1v5h-1z" fill="#c8fff8"/>
<path d="M268 4h14v4h-14zM273 4h4v18h-4z" fill="#00ff00"/>
<path d="M290 13L292 11.5H306V16.5H304V19H302V16.5H300V19H298V16.5H296V19H294V16.5H292Z" fill="#3e423e" shape-rendering="auto"/><ellipse cx="309.5" cy="15" rx="3.6" ry="5.8" fill="#3e423e"/><rect x="308.5" y="12" width="2" height="6" fill="#565956"/>
<path d="M315 4h1v15h-1zM334 5h1v16h-1zM331 21h3v1h-3z" fill="#6058e0"/><path d="M316.5 3.5H335.5V22.5H318.5L316.5 20.5Z" fill="none" stroke="#b8f0e0" stroke-width="1"/><path d="M319.5 3.5V12.5H332.5V3.5" fill="none" stroke="#c8e8f0"/><path d="M320.5 22V15.5H330.5V22" fill="none" stroke="#c0f0e8"/><rect x="325" y="16" width="5" height="6" fill="#c8fff8"/><rect x="321" y="5" width="1.5" height="6" fill="#2808c0"/><rect x="323" y="17" width="1.5" height="4" fill="#2808c0"/><rect x="320" y="12" width="12" height="1" fill="#a8a0f0"/>
<path d="M345 3h13v10h-13zM347 5v8h9V5z" fill="#444844" fill-rule="evenodd"/><path d="M348 6h7v1h-7zM348 8h7v2h-7zM348 11h7v1h-7z" fill="#444844"/><path d="M342 13h19v1h1v9h-1v1h-19v-1h-1v-9h1zM343 15v7h17v-7z" fill="#444844" fill-rule="evenodd"/><path d="M344 17h14v3h-14z" fill="#444844"/>
<rect x="366" y="1" width="2" height="26" fill="#000"/>
<rect x="393.5" y="3.5" width="113" height="21" fill="#000" stroke="#7878a8" stroke-width="1.5"/>
<path d="M395.50 12.46 L395.75 10.06 L396.00 8.30 L396.25 7.52 L396.50 7.86 L396.75 9.26 L397.00 11.45 L397.25 14.02 L397.50 16.50 L397.75 18.41 L398.00 19.41 L398.25 19.30 L398.50 18.10 L398.75 16.04 L399.00 13.50 L399.25 10.96 L399.50 8.90 L399.75 7.70 L400.00 7.59 L400.25 8.59 L400.50 10.50 L400.75 12.98 L401.00 15.55 L401.25 17.74 L401.50 19.14 L401.75 19.48 L402.00 18.70 L402.25 16.94 L402.50 14.54 L402.75 11.95 L403.00 9.64 L403.25 8.06 L403.50 7.50M496.00 12.46 L496.25 10.06 L496.50 8.30 L496.75 7.52 L497.00 7.86 L497.25 9.26 L497.50 11.45 L497.75 14.02 L498.00 16.50 L498.25 18.41 L498.50 19.41 L498.75 19.30 L499.00 18.10 L499.25 16.04 L499.50 13.50 L499.75 10.96 L500.00 8.90 L500.25 7.70 L500.50 7.59 L500.75 8.59 L501.00 10.50 L501.25 12.98 L501.50 15.55 L501.75 17.74 L502.00 19.14 L502.25 19.48 L502.50 18.70 L502.75 16.94 L503.00 14.54 L503.25 11.95 L503.50 9.64 L503.75 8.06 L504.00 7.50 L504.25 8.06 L504.50 9.64 L504.75 11.95 L505.00 14.54" fill="none" stroke="#0c5058" stroke-width="1.1" shape-rendering="auto"/>
<rect x="405.3" y="4.3" width="88.3" height="19.4" fill="#000" stroke="#ff6410" stroke-width="2.6"/>
<path d="M408.0 18.07 L408.5 19.98 L409.0 20.86 L409.5 20.57 L410.0 19.14 L410.5 16.81 L411.0 13.97 L411.5 11.06 L412.0 8.57 L412.5 6.89 L413.0 6.30 L413.5 6.89 L414.0 8.57 L414.5 11.06 L415.0 13.97 L415.5 16.81 L416.0 19.14 L416.5 20.57 L417.0 20.86 L417.5 19.98 L418.0 18.07 L418.5 15.43 L419.0 12.49 L419.5 9.74 L420.0 7.61 L420.5 6.45 L421.0 6.45 L421.5 7.61 L422.0 9.74 L422.5 12.49 L423.0 15.43 L423.5 18.07 L424.0 19.98 L424.5 20.86 L425.0 20.57 L425.5 19.14 L426.0 16.81 L426.5 13.97 L427.0 11.06 L427.5 8.57 L428.0 6.89 L428.5 6.30 L429.0 6.89 L429.5 8.57 L430.0 11.06 L430.5 13.97 L431.0 16.81 L431.5 19.14 L432.0 20.57 L432.5 20.86 L433.0 19.98 L433.5 18.07 L434.0 15.43 L434.5 12.49 L435.0 9.74 L435.5 7.61 L436.0 6.45 L436.5 6.45 L437.0 7.61 L437.5 9.74 L438.0 12.49 L438.5 15.43 L439.0 18.07 L439.5 19.98 L440.0 20.86 L440.5 20.57 L441.0 19.14 L441.5 16.81 L442.0 13.97 L442.5 11.06 L443.0 8.57 L443.5 6.89 L444.0 6.30 L444.5 6.89 L445.0 8.57 L445.5 11.06 L446.0 13.97 L446.5 16.81 L447.0 19.14 L447.5 20.57 L448.0 20.86 L448.5 19.98 L449.0 18.07 L449.5 15.43 L450.0 12.49 L450.5 9.74 L451.0 7.61 L451.5 6.45 L452.0 6.45 L452.5 7.61 L453.0 9.74 L453.5 12.49 L454.0 15.43 L454.5 18.07 L455.0 19.98 L455.5 20.86 L456.0 20.57 L456.5 19.14 L457.0 16.81 L457.5 13.97 L458.0 11.06 L458.5 8.57 L459.0 6.89 L459.5 6.30 L460.0 6.89 L460.5 8.57 L461.0 11.06 L461.5 13.97 L462.0 16.81 L462.5 19.14 L463.0 20.57 L463.5 20.86 L464.0 19.98 L464.5 18.07 L465.0 15.43 L465.5 12.49 L466.0 9.74 L466.5 7.61 L467.0 6.45 L467.5 6.45 L468.0 7.61 L468.5 9.74 L469.0 12.49 L469.5 15.43 L470.0 18.07 L470.5 19.98 L471.0 20.86 L471.5 20.57 L472.0 19.14 L472.5 16.81 L473.0 13.97 L473.5 11.06 L474.0 8.57 L474.5 6.89 L475.0 6.30 L475.5 6.89 L476.0 8.57 L476.5 11.06 L477.0 13.97 L477.5 16.81 L478.0 19.14 L478.5 20.57 L479.0 20.86 L479.5 19.98 L480.0 18.07 L480.5 15.43 L481.0 12.49 L481.5 9.74 L482.0 7.61 L482.5 6.45 L483.0 6.45 L483.5 7.61 L484.0 9.74 L484.5 12.49 L485.0 15.43 L485.5 18.07 L486.0 19.98 L486.5 20.86 L487.0 20.57 L487.5 19.14 L488.0 16.81 L488.5 13.97 L489.0 11.06 L489.5 8.57 L490.0 6.89 L490.5 6.30 L491.0 6.89 L491.5 8.57 L492.0 11.06 L492.5 13.97" fill="none" stroke="#00ffff" stroke-width="2.4" shape-rendering="auto"/>
<rect x="521.5" y="3.5" width="21" height="20" fill="#000" stroke="#aaa4aa" stroke-width="1"/>
<path d="M524.3 7.5L528.3 20L531.5 8.5L534.7 20L538.7 7.5" fill="none" stroke="#c8fff8" stroke-width="2.1" stroke-linejoin="round" shape-rendering="auto"/>
<rect x="547" y="4" width="99" height="20" rx="6" fill="#000"/>
<g filter="url(#tha)"><text transform="translate(569.000 21) scale(1.0 1)" x="0" y="0" font-size="18.9" font-family="Liberation Sans" fill="#ffffff" textLength="55.000" lengthAdjust="spacingAndGlyphs">8.00us</text></g>
<g filter="url(#thb)"><text transform="translate(15.000 470) scale(1.0 1)" x="0" y="0" font-size="17.44" font-family="Liberation Sans" fill="#ffff00" textLength="30.000" lengthAdjust="spacingAndGlyphs">CH1</text></g>
<rect x="48" y="453" width="62" height="22" rx="11" fill="#000"/>
<g filter="url(#thb)"><text transform="translate(52.000 472) scale(1.0 1)" x="0" y="0" font-size="15.99" font-family="Liberation Sans" fill="#ffff00" textLength="55.000" lengthAdjust="spacingAndGlyphs">10.0mV</text></g>
<g filter="url(#thb)"><text transform="translate(418.000 470) scale(1.0 1)" x="0" y="0" font-size="17.44" font-family="Liberation Sans" fill="#ffff00" textLength="30.000" lengthAdjust="spacingAndGlyphs">CH1</text></g>
<path d="M453 472.5H458L464.5 456H470" fill="none" stroke="#80c0ff" stroke-width="1.8"/>
<rect x="473" y="453" width="70" height="22" rx="11" fill="#000"/>
<g filter="url(#thb)"><text transform="translate(481.000 470) scale(1.0 1)" x="0" y="0" font-size="15.99" font-family="Liberation Sans" fill="#ffff00" textLength="56.000" lengthAdjust="spacingAndGlyphs">11.6mV</text></g>
<rect x="550" y="453" width="100" height="22" rx="11" fill="#000"/>
<g filter="url(#thb)"><text transform="translate(557.000 470) scale(1.0 1)" x="0" y="0" font-size="15.99" font-family="Liberation Sans" fill="#ffff00" textLength="86.000" lengthAdjust="spacingAndGlyphs">74.3450KHz</text></g>
</svg>
</body></html>
